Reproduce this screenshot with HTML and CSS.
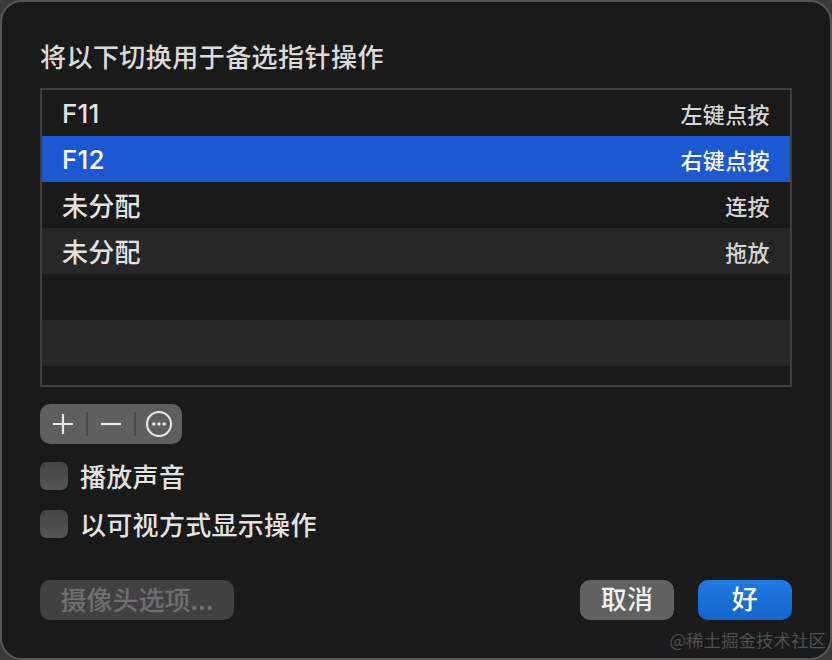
FILE: index.html
```html
<!DOCTYPE html>
<html lang="zh">
<head>
<meta charset="utf-8">
<title>指针操作</title>
<link rel="stylesheet" href="styles.css">
</head>
<body>
<div class="dialog">
  <h1 class="title">将以下切换用于备选指针操作</h1>
  <div class="list">
    <div class="row"><span class="key">F11</span><span class="action">左键点按</span></div>
    <div class="row selected"><span class="key">F12</span><span class="action">右键点按</span></div>
    <div class="row"><span class="key cjk">未分配</span><span class="action">连按</span></div>
    <div class="row alt"><span class="key cjk">未分配</span><span class="action">拖放</span></div>
    <div class="row"></div>
    <div class="row alt"></div>
    <div class="row last"></div>
  </div>
  <div class="toolbar">
    <span class="tool">
      <svg width="26" height="26" viewBox="0 0 26 26"><path d="M13 3v20M3 13h20" stroke="#eaeaea" stroke-width="2.200" fill="none"/></svg>
    </span>
    <span class="sep"></span>
    <span class="tool">
      <svg width="26" height="26" viewBox="0 0 26 26"><path d="M3 13h20" stroke="#eaeaea" stroke-width="2.200" fill="none"/></svg>
    </span>
    <span class="sep"></span>
    <span class="tool">
      <svg width="26" height="26" viewBox="0 0 26 26"><circle cx="13" cy="13" r="12" stroke="#eaeaea" stroke-width="2" fill="none"/><circle cx="7.800" cy="13" r="1.700" fill="#eaeaea"/><circle cx="13" cy="13" r="1.700" fill="#eaeaea"/><circle cx="18.200" cy="13" r="1.700" fill="#eaeaea"/></svg>
    </span>
  </div>
  <label class="check first"><span class="box"></span><span class="label">播放声音</span></label>
  <label class="check"><span class="box"></span><span class="label">以可视方式显示操作</span></label>
  <div class="footer">
    <button class="btn disabled">摄像头选项...</button>
    <div class="actions">
      <button class="btn cancel">取消</button>
      <button class="btn ok">好</button>
    </div>
  </div>
  <div class="watermark">@稀土掘金技术社区</div>
</div>
</body>
</html>
```
FILE: styles.css
```css
* { box-sizing: border-box; }
html, body { margin: 0; padding: 0; width: 832px; height: 660px; overflow: hidden; background: #3a3a3a; }
body { font-family: "Noto Sans CJK SC", "Liberation Sans", sans-serif; color: #e6e6e6; }
.dialog {
  position: relative;
  width: 832px;
  height: 660px;
  padding: 39px 38px 0;
  background: #1a1a1b;
  border: 2px solid #575757;
  border-radius: 22px;
}
.title { margin: 0; font-size: 26px; font-weight: 500; line-height: 30px; height: 47px; letter-spacing: .45px; color: #dadada; }
.list { width: 752px; height: 299px; border: 2px solid #3f3f3f; background: #1a1a1b; overflow: hidden; }
.row { height: 46px; display: flex; justify-content: space-between; align-items: center; padding: 0 20px; }
.row.alt { background: #272727; }
.row.last { height: 19px; }
.row.selected { background: #1c58d2; color: #fff; }
.key { font-size: 26px; font-weight: 500; letter-spacing: .2px; color: #e2e2e2; font-family: "Inter", "Noto Sans CJK SC", sans-serif; }
.selected .key { color: #fff; }
.key.cjk { padding-bottom: 2px; }
.action { font-size: 22px; font-weight: 500; letter-spacing: .4px; color: #d6d6d6; }
.selected .action { color: #fff; }
.toolbar { margin-top: 17px; width: 142px; height: 40px; border-radius: 10px; background: #5f5f5f; display: flex; align-items: center; }
.tool { flex: 1; display: flex; justify-content: center; }
.tool svg { display: block; }
.sep { flex: none; width: 2px; height: 24px; background: #4a4a4a; }
.check { display: flex; align-items: center; gap: 12px; height: 28px; font-size: 26px; font-weight: 500; margin-top: 20px; letter-spacing: .3px; color: #e2e2e2; }
.check.first { margin-top: 18px; }
.label { padding-bottom: 2px; }
.box { width: 28px; height: 28px; border-radius: 7px; background: linear-gradient(#444, #565656); flex: none; }
.footer { display: flex; justify-content: space-between; margin-top: 42px; width: 752px; }
.actions { display: flex; gap: 24px; }
.btn { height: 40px; border: 0; border-radius: 10px; font-family: inherit; font-size: 26px; line-height: 36px; padding: 0 0 4px; letter-spacing: .3px; color: #f0f0f0; }
.disabled { width: 194px; background: #414141; color: #6f6f6f; font-weight: 500; letter-spacing: 0; padding-bottom: 2px; }
.cancel { width: 94px; background: #616161; font-weight: 500; }
.ok { width: 94px; background: linear-gradient(#2079e2, #1565cc); color: #fff; font-weight: 500; }
.watermark { position: absolute; right: 4px; bottom: 6px; font-size: 17.500px; line-height: 24px; color: #4f4f4f; }
```
